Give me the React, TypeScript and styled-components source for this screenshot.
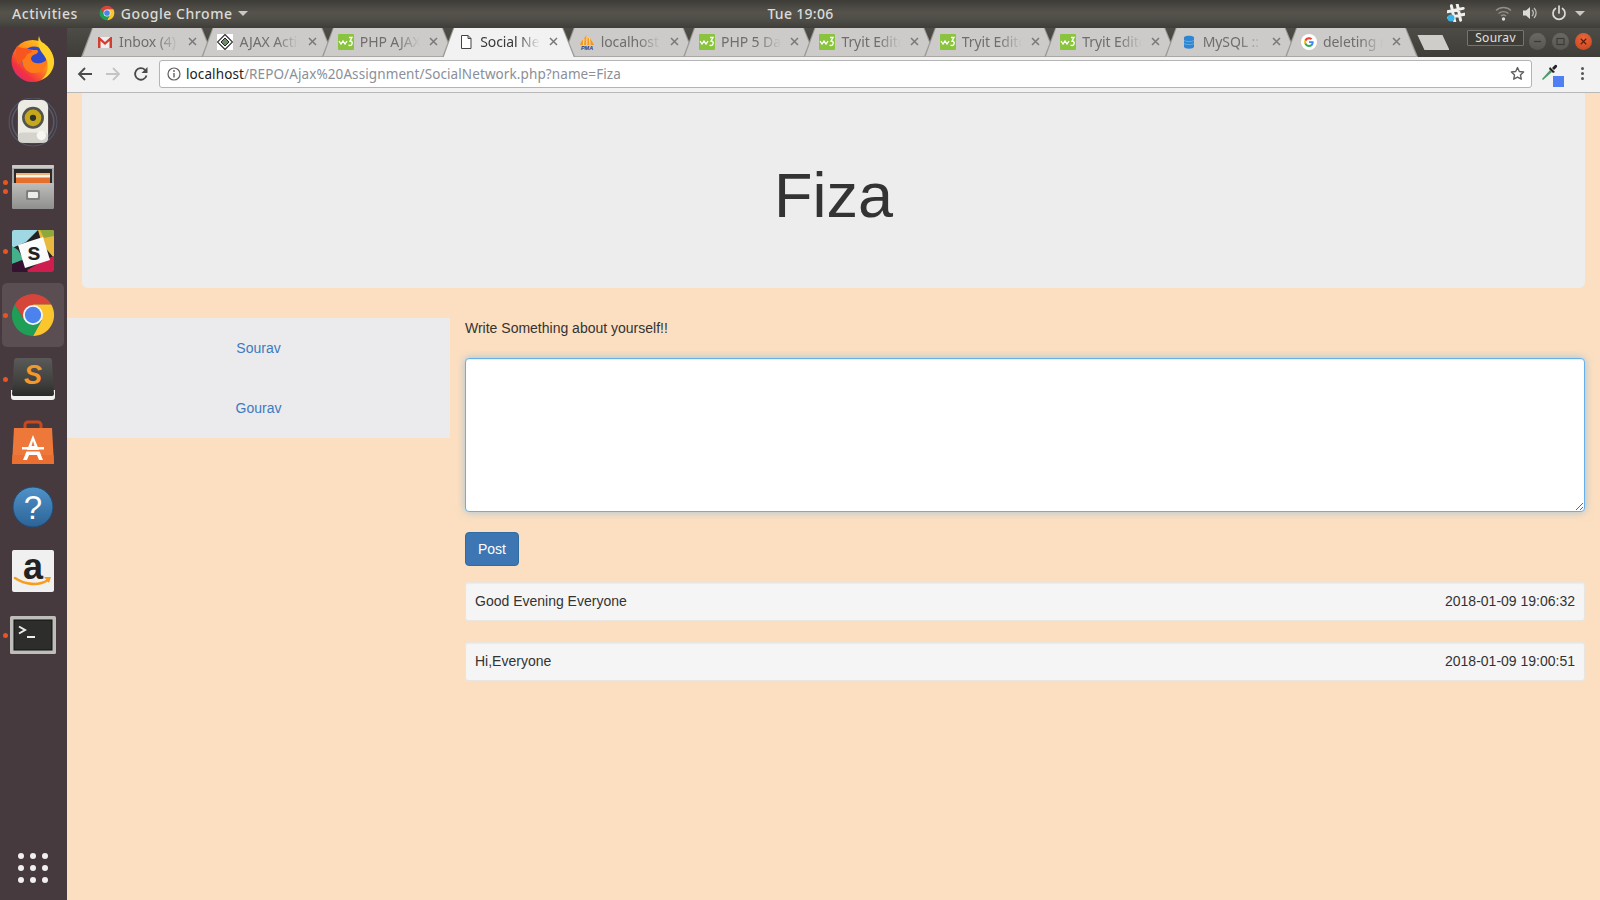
import React from "react";
import styled, { createGlobalStyle } from "styled-components";

const Global = createGlobalStyle`
  html, body { margin: 0; padding: 0; background: #fcdfc0; }
  * { box-sizing: border-box; }
`;

const Screen = styled.div`
  width: 1600px;
  height: 900px;
  overflow: hidden;
  display: flex;
  flex-direction: column;
  font-family: "Liberation Sans", Arial, sans-serif;
`;

const TopBar = styled.header`
  height: 28px;
  flex: none;
  display: grid;
  grid-template-columns: 1fr auto 1fr;
  align-items: center;
  padding: 0 11px 2px 12px;
  background: linear-gradient(#3d3c37, #55534c 45%, #4d4b45 75%, #3e3d38);
  color: #dcdbd7;
  font-family: "Noto Sans", "Open Sans", sans-serif;
  font-size: 14px;
  font-weight: 500;
  letter-spacing: 0.55px;
`;

const TopLeft = styled.div`
  display: flex;
  align-items: center;
`;

const AppMenu = styled.div`
  display: flex;
  align-items: center;
  gap: 6px;
  margin-left: 21px;
`;

const Caret = styled.span`
  width: 0;
  height: 0;
  margin-left: -1px;
  border-left: 5px solid transparent;
  border-right: 5px solid transparent;
  border-top: 5px solid #c9c8c4;
`;

const Clock = styled.div`
  text-align: center;
  letter-spacing: 0.3px;
`;

const Tray = styled.div`
  display: flex;
  justify-content: flex-end;
  align-items: center;
  padding-right: 4px;
`;

const TrayIcon = styled.span<{ $gap: number }>`
  display: flex;
  margin-right: ${(p) => p.$gap}px;
`;

const Body = styled.div`
  flex: 1;
  display: flex;
  min-height: 0;
`;

const Dock = styled.nav`
  width: 67px;
  flex: none;
  display: flex;
  flex-direction: column;
  background: #463a3f;
  padding-bottom: 17px;
`;

const DockItem = styled.div<{ $active?: boolean }>`
  position: relative;
  height: 64px;
  display: flex;
  align-items: center;
  justify-content: center;
  margin: -1px 3px 1px 2px;
  border-radius: 5px;
  background: ${(p) => (p.$active ? "#5b4e53" : "transparent")};
`;

const RunDots = styled.div`
  position: absolute;
  left: 1px;
  top: 0;
  bottom: 0;
  display: flex;
  flex-direction: column;
  justify-content: center;
  gap: 4px;
`;

const RunDot = styled.span`
  width: 5px;
  height: 5px;
  border-radius: 50%;
  background: #e95420;
`;

const AppGrid = styled.div`
  margin: auto 0 0 18px;
  display: grid;
  grid-template-columns: repeat(3, 6px);
  gap: 6px;
`;

const AppGridDot = styled.span`
  width: 6px;
  height: 6px;
  border-radius: 50%;
  background: #f1efef;
`;

const Browser = styled.div`
  flex: 1;
  min-width: 0;
  display: flex;
  flex-direction: column;
`;

const TabStrip = styled.div`
  height: 29px;
  flex: none;
  display: flex;
  align-items: stretch;
  padding-left: 14px;
  background: linear-gradient(#4e4c46, #3e3d38);
`;

const Tab = styled.div<{ $active?: boolean }>`
  position: relative;
  z-index: ${(p) => (p.$active ? 2 : 1)};
  width: 133px;
  flex: none;
  margin-right: -12.6px;
  background: #9b9a97;
  clip-path: polygon(11px 0, 121px 0, 133px 100%, 0 100%);
`;

const TabFill = styled.div<{ $active?: boolean }>`
  height: 100%;
  display: flex;
  align-items: center;
  padding: 0 0 2px 16px;
  background: ${(p) => (p.$active ? "#f2f2f2" : "#cdcbc9")};
  box-shadow: ${(p) => (p.$active ? "none" : "inset 0 -1px 0 #a9a8a5")};
  clip-path: polygon(12px 0, 120px 0, 131.5px 100%, 1.5px 100%);
`;

const Favicon = styled.span`
  width: 16px;
  height: 16px;
  flex: none;
  display: flex;
`;

const TabTitle = styled.span<{ $active?: boolean }>`
  width: 60px;
  margin-left: 6px;
  overflow: hidden;
  white-space: nowrap;
  font-family: "Noto Sans", "Open Sans", sans-serif;
  font-size: 14px;
  letter-spacing: -0.1px;
  color: ${(p) => (p.$active ? "#3a3a3a" : "#6f6e6d")};
  -webkit-mask-image: linear-gradient(to right, #000 62%, transparent 100%);
  mask-image: linear-gradient(to right, #000 62%, transparent 100%);
`;

const TabClose = styled.span`
  display: flex;
  margin-left: 9px;
`;

const NewTab = styled.div`
  width: 32px;
  height: 15px;
  margin: 7px 0 0 12px;
  flex: none;
  background: #cfcdca;
  clip-path: polygon(0 0, 25px 0, 32px 100%, 7px 100%);
`;

const WindowControls = styled.div`
  margin-left: auto;
  display: flex;
  align-items: flex-start;
  padding: 2px 8px 0 0;
  gap: 6px;
`;

const UserChip = styled.div`
  width: 57px;
  height: 16px;
  margin-right: -1px;
  border: 1px solid #76746e;
  border-radius: 1px;
  background: #3f3d38;
  color: #e3e2df;
  font-family: "Noto Sans", "Open Sans", sans-serif;
  font-size: 12px;
  line-height: 14px;
  letter-spacing: 0.3px;
  text-align: center;
`;

const WindowButton = styled.span<{ $close?: boolean }>`
  width: 17px;
  height: 17px;
  margin-top: 3px;
  border-radius: 50%;
  display: flex;
  align-items: center;
  justify-content: center;
  background: ${(p) => (p.$close ? "radial-gradient(circle at 50% 30%, #e8663c, #c9431b)" : "linear-gradient(#6a6863, #585650)")};
`;

const Toolbar = styled.div`
  height: 36px;
  flex: none;
  display: flex;
  align-items: center;
  background: #f2f2f2;
  border-bottom: 1px solid #b8b8b8;
  padding: 0 0 2px 4px;
`;

const NavButton = styled.span`
  width: 28px;
  flex: none;
  display: flex;
  justify-content: center;
`;

const Omnibox = styled.div`
  width: 1373px;
  height: 28px;
  margin: 0 0 0 4px;
  flex: none;
  display: flex;
  align-items: center;
  padding: 0 6px 0 7px;
  background: #fff;
  border: 1px solid #b4b4b4;
  border-radius: 3px;
`;

const Url = styled.div`
  margin-left: 5px;
  flex: 1;
  font-family: "Noto Sans", "Open Sans", sans-serif;
  font-size: 13.5px;
  letter-spacing: 0.1px;
  color: #8a8f98;
  white-space: nowrap;
`;

const UrlHost = styled.span`
  color: #222;
`;

const Extension = styled.span`
  position: relative;
  width: 24px;
  height: 24px;
  margin-left: 8px;
  flex: none;
`;

const ExtensionBadge = styled.span`
  position: absolute;
  right: 0;
  bottom: -1px;
  width: 11px;
  height: 11px;
  background: #4f7ff2;
`;

const MenuDots = styled.span`
  display: flex;
  flex-direction: column;
  gap: 2px;
  margin-left: 17px;
`;

const MenuDot = styled.span`
  width: 3px;
  height: 3px;
  border-radius: 50%;
  background: #555;
`;

const Page = styled.main`
  flex: 1;
  min-height: 0;
  background: #fcdfc0;
  color: #333;
  font-size: 14px;
  line-height: 20px;
`;

const Hero = styled.section`
  height: 195px;
  margin: 0 15px 30px;
  padding-top: 10px;
  display: flex;
  align-items: center;
  justify-content: center;
  background: #ededed;
  border-radius: 0 0 6px 6px;
`;

const HeroTitle = styled.h1`
  margin: 0;
  font-size: 63px;
  font-weight: 400;
  line-height: 69px;
  color: #333;
`;

const Columns = styled.div`
  display: flex;
  align-items: flex-start;
`;

const Sidebar = styled.aside`
  width: 383px;
  flex: none;
  background: #ebebed;
`;

const SideLink = styled.a`
  display: block;
  height: 60px;
  padding-top: 20px;
  text-align: center;
  color: #3d7abf;
  text-decoration: none;
`;

const Feed = styled.div`
  flex: 1;
  min-width: 0;
  padding: 0 15px;
`;

const Prompt = styled.p`
  margin: 0 0 20px;
`;

const PostBox = styled.textarea`
  display: block;
  width: 100%;
  height: 154px;
  margin-bottom: 20px;
  padding: 6px 12px;
  background: #fff;
  border: 1px solid #66afe9;
  border-radius: 4px;
  box-shadow: inset 0 1px 1px rgba(0, 0, 0, 0.075), 0 0 8px rgba(102, 175, 233, 0.6);
  outline: none;
  resize: vertical;
`;

const PostButton = styled.button`
  display: block;
  height: 34px;
  width: 54px;
  margin-bottom: 16px;
  padding: 0;
  background: #3e75b3;
  border: 1px solid #2e6da4;
  border-radius: 4px;
  color: #fff;
  font: 14px/20px "Liberation Sans", Arial, sans-serif;
`;

const Well = styled.div`
  display: flex;
  justify-content: space-between;
  height: 39px;
  margin-bottom: 21px;
  padding: 8px 9px;
  background: #f5f5f5;
  border: 1px solid #e9e6e2;
  border-radius: 3px;
  box-shadow: inset 0 1px 1px rgba(0, 0, 0, 0.04);
`;

const ChromeLogo = ({ size }: { size: number }) => (
  <svg width={size} height={size} viewBox="0 0 48 48">
    <path d="M4.95 13A22 22 0 0 1 43.05 13H24L15 29.5Z" fill="#d6453a" />
    <path d="M43.05 13A22 22 0 0 1 24 46L33 29.5 24 13Z" fill="#fbc52e" />
    <path d="M24 46A22 22 0 0 1 4.95 13L15 29.5 33 29.5Z" fill="#1f9e57" />
    <circle cx="24" cy="24" r="10.5" fill="#f4f4f4" />
    <circle cx="24" cy="24" r="8.5" fill="#4b82ee" />
  </svg>
);

const Firefox = () => (
  <svg width="48" height="48" viewBox="0 0 48 48">
    <defs>
      <linearGradient id="ffo" x1="0.9" y1="0.1" x2="0.15" y2="0.95">
        <stop offset="0" stopColor="#ffd21e" />
        <stop offset="0.45" stopColor="#ff8a1c" />
        <stop offset="0.8" stopColor="#f2323f" />
        <stop offset="1" stopColor="#e0257c" />
      </linearGradient>
    </defs>
    <circle cx="23.5" cy="26" r="21" fill="url(#ffo)" />
    <circle cx="25" cy="24" r="12.5" fill="#2f49c8" />
    <path d="M16 12c3 3 7 3 12 3 2 1 1 3-1 4-3 1-5 2-5 5 1 4 6 5 10 4 4-1 6-3 7-6 1 9-6 17-15 16C13 37 10 22 16 12Z" fill="#ff7a1a" />
    <path d="M30 1c1 4 2 6 5 8 7 5 11 13 10 20-1 8-7 14-13 16 6-5 8-12 6-19-2-6-6-8-8-14-1-4-1-8 0-11Z" fill="#ffd22a" />
    <path d="M8 11c3 2 8 2 12 3 2 1 3 2 3 3-4 1-6 3-7 6l-7 6C6 23 6 16 8 11Z" fill="#f7571f" />
  </svg>
);

const Rhythmbox = () => (
  <svg width="50" height="50" viewBox="0 0 48 48">
    <circle cx="24" cy="23" r="23" fill="none" stroke="#5c6a80" strokeWidth="1" opacity="0.6" />
    <circle cx="24" cy="23" r="20" fill="none" stroke="#5c6a80" strokeWidth="1.5" opacity="0.7" />
    <rect x="9.5" y="2" width="29" height="41" rx="6" fill="#ecebe4" />
    <rect x="9.5" y="33" width="29" height="10" rx="4" fill="#d4d3cd" />
    <circle cx="24" cy="19" r="10.500" fill="#54534c" />
    <circle cx="24" cy="19" r="8" fill="#c5a81c" />
    <circle cx="24" cy="19" r="3" fill="#33332e" />
    <circle cx="32" cy="36" r="4.500" fill="#f6f6f2" />
  </svg>
);

const FileCabinet = () => (
  <svg width="48" height="48" viewBox="0 0 48 48">
    <defs>
      <linearGradient id="fc" x1="0" y1="0" x2="0" y2="1">
        <stop offset="0" stopColor="#bdbdbb" />
        <stop offset="1" stopColor="#8f8f8d" />
      </linearGradient>
    </defs>
    <rect x="3" y="2" width="42" height="44" rx="2" fill="#a8a8a6" />
    <rect x="3" y="2" width="42" height="3" rx="1" fill="#c9c9c7" />
    <rect x="5" y="6" width="38" height="15" fill="#2c2a28" />
    <rect x="7" y="10" width="34" height="10" fill="#f0b27a" />
    <rect x="7" y="12" width="34" height="2" fill="#fff3e4" />
    <rect x="7" y="15" width="34" height="5" fill="#e5702e" />
    <path d="M3 20h42v24a2 2 0 0 1-2 2H5a2 2 0 0 1-2-2Z" fill="url(#fc)" />
    <rect x="17" y="27" width="14" height="10" rx="1.500" fill="#7f7f7d" />
    <rect x="19" y="29" width="10" height="6" rx="1" fill="#ecece9" />
  </svg>
);

const Slack = () => (
  <svg width="42" height="42" viewBox="0 0 42 42">
    <rect width="42" height="42" rx="2" fill="#222" />
    <path d="M2 0H26L14 12 0 18V2a2 2 0 0 1 2-2Z" fill="#9fd8e2" />
    <path d="M26 0H40a2 2 0 0 1 2 2V28L30 14Z" fill="#e8b93e" />
    <path d="M28 0H40a2 2 0 0 1 2 2V6L32 8Z" fill="#8ea83e" />
    <path d="M42 26V40a2 2 0 0 1-2 2H12L32 30Z" fill="#d01d50" />
    <path d="M0 16V34L12 30 6 20Z" fill="#45b08c" />
    <path d="M0 34V40a2 2 0 0 0 2 2H16L10 30Z" fill="#35122f" />
    <path d="M6 15 31 7 38 30 13 38Z" fill="#fbfbfb" />
    <text x="22" y="30" textAnchor="middle" fontFamily="Liberation Sans" fontWeight="700" fontSize="24" fill="#222">s</text>
  </svg>
);

const Sublime = () => (
  <svg width="46" height="44" viewBox="0 0 46 44">
    <defs>
      <linearGradient id="sb" x1="0" y1="0" x2="0" y2="1">
        <stop offset="0" stopColor="#5a5a58" />
        <stop offset="0.7" stopColor="#3d3d3b" />
        <stop offset="1" stopColor="#2a2a28" />
      </linearGradient>
    </defs>
    <path d="M1 33h44v7a3 3 0 0 1-3 3H4a3 3 0 0 1-3-3Z" fill="#f1f1f1" />
    <path d="M7 1h32a3 3 0 0 1 3 3l2 33a2 2 0 0 1-2 2H4a2 2 0 0 1-2-2L4 4a3 3 0 0 1 3-3Z" fill="url(#sb)" />
    <text x="23" y="27" textAnchor="middle" fontFamily="Liberation Sans" fontStyle="italic" fontWeight="700" fontSize="27" fill="#f3982b">S</text>
  </svg>
);

const SoftwareBag = () => (
  <svg width="44" height="46" viewBox="0 0 44 46">
    <path d="M14 10V5a3 3 0 0 1 3-3h10a3 3 0 0 1 3 3v5" fill="none" stroke="#c9491e" strokeWidth="3" />
    <path d="M3 8h38l2 36H1Z" fill="#ed7839" />
    <path d="M1.500 35h41l.5 9H1Z" fill="#ea6f31" />
    <path d="M22 15 32 40H28L26 35H18L16 40H12Z" fill="#fff" />
    <rect x="11" y="27" width="22" height="2.500" fill="#fff" />
    <path d="M20.500 26h3L22 21Z" fill="#ed7839" />
    <rect x="9" y="30" width="26" height="1.500" fill="#ed7839" />
  </svg>
);

const HelpBall = () => (
  <svg width="42" height="42" viewBox="0 0 42 42">
    <defs>
      <linearGradient id="hb" x1="0" y1="0" x2="0" y2="1">
        <stop offset="0" stopColor="#4f93c9" />
        <stop offset="1" stopColor="#2d6397" />
      </linearGradient>
    </defs>
    <circle cx="21" cy="21" r="20" fill="url(#hb)" stroke="#1f4d7a" strokeWidth="1" />
    <text x="21" y="33" textAnchor="middle" fontFamily="Liberation Sans" fontSize="33" fill="#fff">?</text>
  </svg>
);

const AmazonTile = () => (
  <svg width="42" height="42" viewBox="0 0 42 42">
    <rect width="42" height="42" rx="2" fill="#f0f0f0" />
    <text x="21" y="29" textAnchor="middle" fontFamily="Liberation Sans" fontWeight="700" fontSize="36" fill="#222">a</text>
    <path d="M3 28c10 7 24 8 33 2" fill="none" stroke="#f89c1c" strokeWidth="2.600" strokeLinecap="round" />
    <path d="M32 27h7l-2 6Z" fill="#f89c1c" />
  </svg>
);

const TerminalTile = () => (
  <svg width="46" height="38" viewBox="0 0 46 38">
    <rect width="46" height="38" rx="1.500" fill="#bdbdba" />
    <rect x="3.500" y="3.500" width="39" height="31" fill="#111" />
    <rect x="4.500" y="4.500" width="37" height="29" fill="#2d2d2b" />
    <path d="M9 10.500 15 14 9 17.500" fill="none" stroke="#eee" strokeWidth="2" />
    <path d="M17 21H25" stroke="#eee" strokeWidth="2" />
  </svg>
);

const Gmail = () => (
  <svg width="16" height="16" viewBox="0 0 16 16">
    <rect x="1" y="3" width="14" height="11" fill="#eee" />
    <path d="M1 14V3h1.500L8 8l5.500-5H15v11h-2.500V7L8 11 3.500 7v7Z" fill="#d23f31" />
  </svg>
);

const AjaxIcon = () => (
  <svg width="16" height="16" viewBox="0 0 16 16">
    <rect width="16" height="16" fill="#fff" />
    <path d="M8 .5 15.500 8 8 15.500.5 8Z" fill="#fff" stroke="#333" strokeWidth="1.200" />
    <path d="M8 4 12 8 8 12 4 8Z" fill="#6d8a6a" stroke="#222" strokeWidth="1" />
  </svg>
);

const W3Icon = () => (
  <svg width="16" height="16" viewBox="0 0 16 16">
    <rect width="16" height="16" rx="1" fill="#8ac43f" />
    <path d="M1 7 3 10 5 7 7 10 9 7" fill="none" stroke="#fff" strokeWidth="1.300" />
    <path d="M11 3.500h3L12 7c2 0 2.500 1.500 2 3s-2 2-3.500 1" fill="none" stroke="#fff" strokeWidth="1.300" />
  </svg>
);

const PageIcon = () => (
  <svg width="16" height="16" viewBox="0 0 16 16">
    <path d="M3.500 1.500H10L13 4.500V14.500H3.500Z M10 1.500V4.500H13" fill="#fff" stroke="#444" strokeWidth="1" />
  </svg>
);

const PmaIcon = () => (
  <svg width="16" height="16" viewBox="0 0 16 16">
    <path d="M1 11C2 8 4 5 5 5L6 3 8 1l1 3 2 0 3 5 1 2Z" fill="#f39a1e" />
    <path d="M5 5 4.500 11M8 2 7.800 11M10.500 4 11 11" stroke="#fff" strokeWidth="0.700" />
    <text x="8" y="15.500" textAnchor="middle" fontFamily="Liberation Sans" fontWeight="700" fontStyle="italic" fontSize="5.500" fill="#2b3c7e">PMA</text>
  </svg>
);

const MysqlIcon = () => (
  <svg width="16" height="16" viewBox="0 0 16 16">
    <path d="M3 3.500C3 1 13 1 13 3.500V12.500C13 15.500 3 15.500 3 12.500Z" fill="#2e86d1" />
    <path d="M3 6.500c2 1.500 8 1.500 10 0M3 9.500c2 1.500 8 1.500 10 0" fill="none" stroke="#7bb8e8" strokeWidth="0.700" />
  </svg>
);

const GoogleIcon = () => (
  <svg width="16" height="16" viewBox="0 0 48 48">
    <circle cx="24" cy="24" r="24" fill="#fff" />
    <path d="M38 24.500c0-1-.1-2-.3-3H24v5.700h7.900c-.4 1.900-1.400 3.400-3 4.500v3.700h4.800C36.400 32.800 38 29 38 24.500Z" fill="#4285f4" />
    <path d="M24 39c4 0 7.400-1.300 9.700-3.600l-4.800-3.700c-1.300.9-3 1.400-4.900 1.400-3.800 0-7-2.600-8.200-6H10.900v3.800C13.300 35.700 18.300 39 24 39Z" fill="#34a853" />
    <path d="M15.800 27.100c-.6-1.800-.6-3.800 0-5.700v-3.800h-4.900a15 15 0 0 0 0 13.300Z" fill="#fbbc05" />
    <path d="M24 15.400c2.200 0 4.100.8 5.600 2.200l4.200-4.200A14.500 14.500 0 0 0 10.900 17.600l4.900 3.800c1.200-3.400 4.400-6 8.200-6Z" fill="#ea4335" />
  </svg>
);

const CloseX = ({ color = "#7a7977", size = 9 }: { color?: string; size?: number }) => (
  <svg width={size} height={size} viewBox="0 0 9 9">
    <path d="M1 1 8 8M8 1 1 8" stroke={color} strokeWidth="1.500" />
  </svg>
);

const tabs = [
  { title: "Inbox (4) - fiza", icon: <Gmail /> },
  { title: "AJAX Action", icon: <AjaxIcon /> },
  { title: "PHP AJAX and", icon: <W3Icon /> },
  { title: "Social Network", icon: <PageIcon />, active: true },
  { title: "localhost / 127", icon: <PmaIcon /> },
  { title: "PHP 5 Data Types", icon: <W3Icon /> },
  { title: "Tryit Editor", icon: <W3Icon /> },
  { title: "Tryit Editor", icon: <W3Icon /> },
  { title: "Tryit Editor", icon: <W3Icon /> },
  { title: "MySQL :: MySQL", icon: <MysqlIcon /> },
  { title: "deleting rows", icon: <GoogleIcon /> },
];

const dockItems = [
  { icon: <Firefox />, dots: 0 },
  { icon: <Rhythmbox />, dots: 0 },
  { icon: <FileCabinet />, dots: 2 },
  { icon: <Slack />, dots: 1 },
  { icon: <ChromeLogo size={46} />, dots: 1, active: true },
  { icon: <Sublime />, dots: 1 },
  { icon: <SoftwareBag />, dots: 0 },
  { icon: <HelpBall />, dots: 0 },
  { icon: <AmazonTile />, dots: 0 },
  { icon: <TerminalTile />, dots: 1 },
];

export default function App() {
  return (
    <Screen>
      <Global />
      <TopBar>
        <TopLeft>
          <span>Activities</span>
          <AppMenu>
            <ChromeLogo size={16} />
            <span>Google Chrome</span>
            <Caret />
          </AppMenu>
        </TopLeft>
        <Clock>Tue 19:06</Clock>
        <Tray>
          <TrayIcon $gap={30}>
            <svg width="18" height="18" viewBox="0 0 18 18">
              <path d="M6 1v16M12 1v16M1 6h16M1 12h16" stroke="#f0f0ee" strokeWidth="3" strokeLinecap="round" transform="rotate(-12 9 9)" />
              <circle cx="4" cy="14" r="3.500" fill="#39b3e6" />
            </svg>
          </TrayIcon>
          <TrayIcon $gap={10}>
            <svg width="17" height="16" viewBox="0 0 17 16">
              <path d="M1 5.500a11 11 0 0 1 15 0M3.500 8.500a7.500 7.500 0 0 1 10 0M6 11a3.500 3.500 0 0 1 5 0" fill="none" stroke="#8f8e8a" strokeWidth="1.400" />
              <circle cx="8.500" cy="14" r="1.700" fill="#dcdbd7" />
            </svg>
          </TrayIcon>
          <TrayIcon $gap={13}>
            <svg width="16" height="16" viewBox="0 0 16 16">
              <path d="M1 5.500h3L8 2v12L4 10.500H1Z" fill="#dcdbd7" />
              <path d="M10 5a4 4 0 0 1 0 6M12 3a7 7 0 0 1 0 10" fill="none" stroke="#bdbcb8" strokeWidth="1.300" />
            </svg>
          </TrayIcon>
          <TrayIcon $gap={9}>
            <svg width="16" height="16" viewBox="0 0 16 16">
              <path d="M8 1v7M4.500 3.500a6 6 0 1 0 7 0" fill="none" stroke="#dcdbd7" strokeWidth="1.700" strokeLinecap="round" />
            </svg>
          </TrayIcon>
          <TrayIcon $gap={0}>
            <Caret />
          </TrayIcon>
        </Tray>
      </TopBar>
      <Body>
        <Dock>
          {dockItems.map((d, i) => (
            <DockItem key={i} $active={d.active}>
              {d.dots > 0 && (
                <RunDots>
                  {Array.from({ length: d.dots }).map((_, k) => (
                    <RunDot key={k} />
                  ))}
                </RunDots>
              )}
              {d.icon}
            </DockItem>
          ))}
          <AppGrid>
            {Array.from({ length: 9 }).map((_, i) => (
              <AppGridDot key={i} />
            ))}
          </AppGrid>
        </Dock>
        <Browser>
          <TabStrip>
            {tabs.map((t, i) => (
              <Tab key={i} $active={t.active}>
                <TabFill $active={t.active}>
                  <Favicon>{t.icon}</Favicon>
                  <TabTitle $active={t.active}>{t.title}</TabTitle>
                  <TabClose>
                    <CloseX />
                  </TabClose>
                </TabFill>
              </Tab>
            ))}
            <NewTab />
            <WindowControls>
              <UserChip>Sourav</UserChip>
              <WindowButton>
                <svg width="9" height="9" viewBox="0 0 9 9"><path d="M1 4.500h7" stroke="#3a3935" strokeWidth="1.200" /></svg>
              </WindowButton>
              <WindowButton>
                <svg width="9" height="9" viewBox="0 0 9 9"><rect x="1" y="1.500" width="7" height="6" fill="none" stroke="#3a3935" strokeWidth="1.100" /></svg>
              </WindowButton>
              <WindowButton $close>
                <CloseX color="#5b1d08" size={7} />
              </WindowButton>
            </WindowControls>
          </TabStrip>
          <Toolbar>
            <NavButton>
              <svg width="16" height="16" viewBox="0 0 16 16"><path d="M15 8H2M8 2 2 8l6 6" fill="none" stroke="#4a4a4a" strokeWidth="1.800" /></svg>
            </NavButton>
            <NavButton>
              <svg width="16" height="16" viewBox="0 0 16 16"><path d="M1 8h13M8 2l6 6-6 6" fill="none" stroke="#c4c4c4" strokeWidth="1.800" /></svg>
            </NavButton>
            <NavButton>
              <svg width="16" height="16" viewBox="0 0 16 16">
                <path d="M13.500 9.500A5.800 5.800 0 1 1 12 3.800" fill="none" stroke="#4a4a4a" strokeWidth="1.800" />
                <path d="M14.500 1v6h-6Z" fill="#4a4a4a" />
              </svg>
            </NavButton>
            <Omnibox>
              <svg width="14" height="14" viewBox="0 0 14 14">
                <circle cx="7" cy="7" r="6" fill="none" stroke="#5f5f5f" strokeWidth="1.200" />
                <path d="M7 6v4.500" stroke="#5f5f5f" strokeWidth="1.400" />
                <circle cx="7" cy="4" r="0.900" fill="#5f5f5f" />
              </svg>
              <Url>
                <UrlHost>localhost</UrlHost>/REPO/Ajax%20Assignment/SocialNetwork.php?name=Fiza
              </Url>
              <svg width="15" height="15" viewBox="0 0 24 24">
                <path d="M12 2.500l2.900 6.300 6.900.8-5.100 4.700 1.400 6.800-6.100-3.400-6.100 3.400 1.400-6.800-5.100-4.700 6.900-.8Z" fill="none" stroke="#5f5f5f" strokeWidth="2.200" strokeLinejoin="round" />
              </svg>
            </Omnibox>
            <Extension>
              <svg width="18" height="20" viewBox="0 0 18 20">
                <path d="M3 18l-1-1L10 8l2 2Z" fill="#4f9a6a" />
                <path d="M10 5l5 5-2 1-4-4Z" fill="#222" />
                <path d="M12 6l3-3a1.500 1.500 0 0 1 2 2l-3 3Z" fill="#222" />
              </svg>
              <ExtensionBadge />
            </Extension>
            <MenuDots>
              <MenuDot />
              <MenuDot />
              <MenuDot />
            </MenuDots>
          </Toolbar>
          <Page>
            <Hero>
              <HeroTitle>Fiza</HeroTitle>
            </Hero>
            <Columns>
              <Sidebar>
                <SideLink href="#">Sourav</SideLink>
                <SideLink href="#">Gourav</SideLink>
              </Sidebar>
              <Feed>
                <Prompt>Write Something about yourself!!</Prompt>
                <PostBox />
                <PostButton>Post</PostButton>
                <Well>
                  <span>Good Evening Everyone</span>
                  <span>2018-01-09 19:06:32</span>
                </Well>
                <Well>
                  <span>Hi,Everyone</span>
                  <span>2018-01-09 19:00:51</span>
                </Well>
              </Feed>
            </Columns>
          </Page>
        </Browser>
      </Body>
    </Screen>
  );
}
